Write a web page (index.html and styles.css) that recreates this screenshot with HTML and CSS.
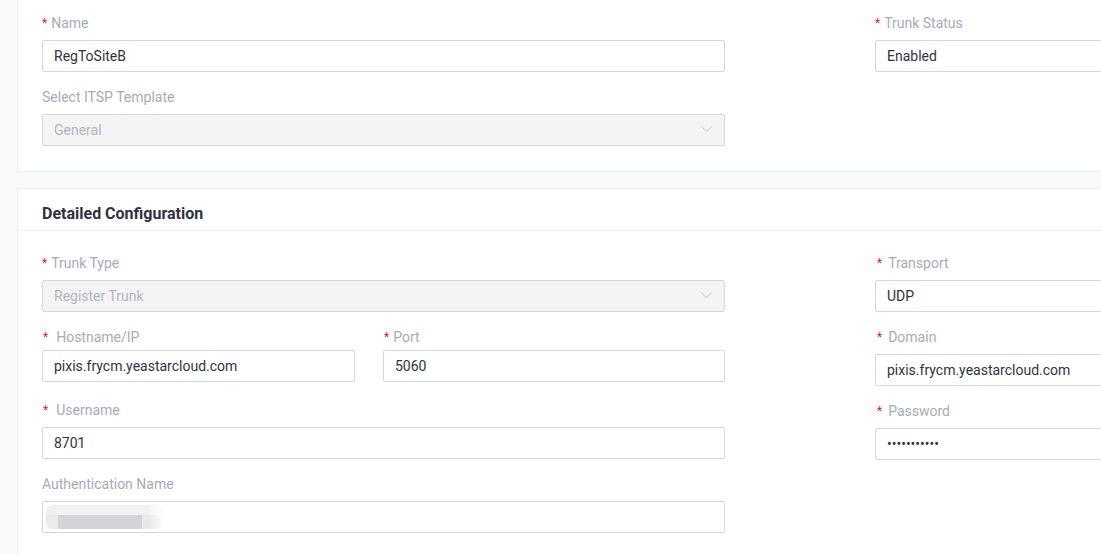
FILE: index.html
```html
<!DOCTYPE html>
<html lang="en">
<head>
<meta charset="utf-8">
<title>Trunk</title>
<link rel="stylesheet" href="styles.css">
</head>
<body>
<div class="page">
  <section class="card card-cut">
    <div class="card-body body-basic">
      <div class="cols">
        <div class="col">
          <div class="item">
            <div class="lbl"><span class="req">*</span>Name</div>
            <div class="input">RegToSiteB</div>
          </div>
          <div class="item">
            <div class="lbl">Select ITSP Template</div>
            <div class="input disabled select"><span>General</span>
              <svg class="chev" width="11" height="7" viewBox="0 0 11 7"><polyline points="0.5,0.5 5.5,6 10.5,0.5" fill="none" stroke="#c6c8d0" stroke-width="1"/></svg>
            </div>
          </div>
        </div>
        <div class="col">
          <div class="item item-right">
            <div class="lbl"><span class="req">*</span>Trunk Status</div>
            <div class="input">Enabled</div>
          </div>
        </div>
      </div>
    </div>
  </section>

  <section class="card">
    <header class="card-head">Detailed Configuration</header>
    <div class="card-body body-detail">
      <div class="cols">
        <div class="col">
          <div class="item">
            <div class="lbl"><span class="req">*</span>Trunk Type</div>
            <div class="input disabled select"><span>Register Trunk</span>
              <svg class="chev" width="11" height="7" viewBox="0 0 11 7"><polyline points="0.5,0.5 5.5,6 10.5,0.5" fill="none" stroke="#c6c8d0" stroke-width="1"/></svg>
            </div>
          </div>
          <div class="split">
            <div class="item item-tight">
              <div class="lbl"><span class="req req-wide">*</span>Hostname/IP</div>
              <div class="input">pixis.frycm.yeastarcloud.com</div>
            </div>
            <div class="item item-tight">
              <div class="lbl"><span class="req req-port">*</span>Port</div>
              <div class="input">5060</div>
            </div>
          </div>
          <div class="item">
            <div class="lbl"><span class="req req-wide">*</span>Username</div>
            <div class="input">8701</div>
          </div>
          <div class="item">
            <div class="lbl">Authentication Name</div>
            <div class="input"><span class="blur"></span></div>
          </div>
        </div>
        <div class="col">
          <div class="item">
            <div class="lbl"><span class="req req-right">*</span>Transport</div>
            <div class="input">UDP</div>
          </div>
          <div class="item">
            <div class="lbl"><span class="req req-right">*</span>Domain</div>
            <div class="input">pixis.frycm.yeastarcloud.com</div>
          </div>
          <div class="item">
            <div class="lbl"><span class="req req-right">*</span>Password</div>
            <div class="input"><span class="dots">•••••••••••</span></div>
          </div>
        </div>
      </div>
    </div>
  </section>
</div>
</body>
</html>
```

FILE: styles.css
```css
html, body {
  margin: 0;
  padding: 0;
  overflow: hidden;
}

body {
  background: #f8f9fb;
  font-family: Roboto, "Liberation Sans", Arial, sans-serif;
  font-size: 14px;
  color: #303340;
}

.page {
  padding-left: 17px;
  width: 1620px;
}

.card {
  background: #ffffff;
  border: 1px solid #eeeff4;
  width: 1590px;
}

.card-cut {
  border-top: none;
  margin-bottom: 16px;
}

.card-head {
  padding: 14px 24px 5px;
  font-size: 16px;
  line-height: 22px;
  font-weight: 700;
  color: #2f3241;
  border-bottom: 1px solid #eeeff4;
}

.card-body {
  padding: 0 24px;
}

.body-basic {
  padding-top: 12px;
  padding-bottom: 11px;
}

.body-detail {
  padding-top: 21px;
  padding-bottom: 20px;
}

.cols {
  display: grid;
  grid-template-columns: 683px 683px;
  column-gap: 150px;
}

.item {
  margin-bottom: 14px;
}

.item-right .input {
  margin-top: 1px;
}

.lbl {
  line-height: 20px;
  padding-top: 1px;
  color: #a7aabc;
  margin-bottom: 7px;
  white-space: nowrap;
}

.req {
  color: #f0162b;
  font-size: 12px;
  margin-right: 4px;
  vertical-align: 1px;
}

.req-wide {
  margin-left: 1px;
  margin-right: 8px;
}

.req-port {
  margin-left: 1px;
  margin-right: 4px;
}

.req-right {
  margin-left: 2px;
  margin-right: 6px;
}

.split {
  display: grid;
  grid-template-columns: 313px 1fr;
  column-gap: 28px;
  margin-bottom: 3px;
}

.item-tight .lbl {
  margin-bottom: 3px;
}

.input {
  box-sizing: border-box;
  height: 32px;
  line-height: 30px;
  border: 1px solid #d6d6e2;
  border-radius: 2px;
  padding: 0 12px 0 11px;
  background: #ffffff;
  color: #303340;
  white-space: nowrap;
  overflow: hidden;
  display: flex;
  align-items: center;
}

.disabled {
  background: #f4f4f5;
  color: #b3b4bd;
}

.select {
  justify-content: space-between;
}

.chev {
  display: block;
  margin-top: -1px;
}

.dots {
  color: #303340;
}

.blur {
  display: block;
  width: 118px;
  height: 24px;
  margin-left: -8px;
  border-radius: 6px;
  background:
    linear-gradient(to right, #ebebee 0 12px, #d3d3d8 12px 96px, #e9e9ec 96px 104px, rgba(255,255,255,0) 118px) 0 10px / 100% 14px no-repeat,
    linear-gradient(to right, #f1f1f3 0 100px, rgba(255,255,255,0) 118px) 0 0 / 100% 10px no-repeat;
}
```
